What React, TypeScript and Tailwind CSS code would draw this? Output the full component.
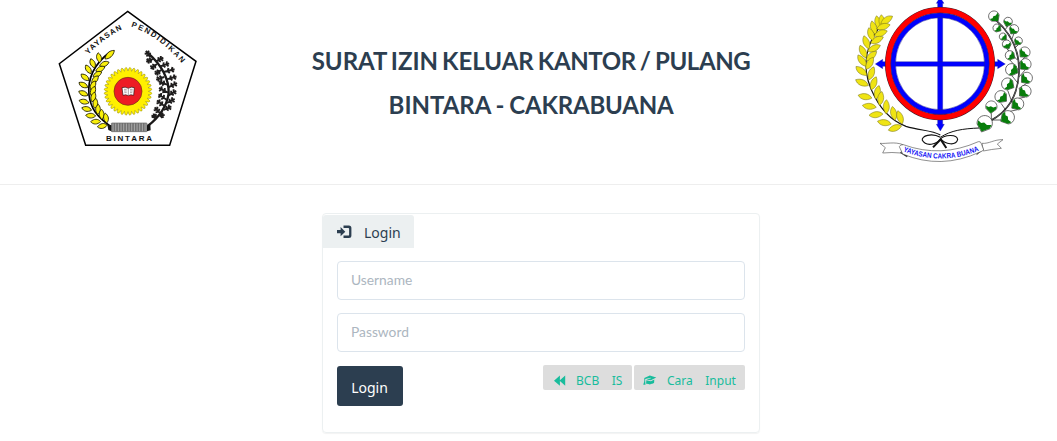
import React from "react";

type Leaf = [number, number, number];
type Pt = [number, number];

const FIRST_LEAVES: Leaf[] = [
  [147, 173, -100], [128, 190, -112], [115, 208, -120], [105, 232, -140], [100, 255, -150],
  [100, 280, -155], [102, 305, -165], [110, 327, -165], [122, 347, -175], [137, 365, 180], [157, 378, 170],
  [163, 192, -20], [151, 207, -25], [142, 223, -30], [135, 239, -48], [129, 256, -60],
  [129, 273, -65], [130, 291, -72], [136, 310, -82], [144, 328, -85], [155, 343, -90], [168, 354, -98],
];

const SECOND_LEAVES: Leaf[] = [
  [99, 68, -102], [86, 83, -105], [78, 103, -108], [64, 127, -110], [54, 155, -115], [51, 182, -125],
  [49, 213, -140], [51, 248, -155], [60, 290, -168], [73, 319, -172], [93, 344, 175], [118, 368, -168],
  [150, 384, 162], [111, 65, -95], [125, 60, -32], [115, 80, -15], [107, 100, -20], [96, 120, -25], [87, 145, -25],
  [79, 168, -40], [74, 190, -58], [79, 220, -68], [86, 250, -68], [97, 277, -75], [107, 295, -80],
  [124, 320, -88], [146, 340, -100], [165, 352, -108],
];

const TWIGS: [Pt, Pt][] = [
  [[302, 172], [293, 160]], [[318, 184], [332, 177]], [[330, 199], [349, 193]], [[341, 216], [365, 210]],
  [[350, 238], [371, 232]], [[355, 262], [373, 253]], [[356, 286], [371, 277]], [[351, 309], [366, 301]],
  [[341, 330], [356, 323]], [[327, 347], [335, 346]], [[310, 177], [297, 182]], [[321, 192], [309, 201]],
  [[334, 210], [322, 218]], [[343, 231], [327, 236]], [[351, 254], [335, 248]], [[354, 278], [335, 268]],
  [[350, 299], [333, 288]], [[344, 319], [328, 307]], [[331, 341], [320, 329]], [[315, 356], [313, 349]],
];

const PODS: [number, number, number, number][] = [
  [447, 49, 16, -40], [489, 65, 13, 20], [456, 84, 12, -55], [507, 88, 14, 35], [474, 110, 11, -50],
  [485, 133, 13, -25], [520, 123, 12, 35], [495, 166, 14, -60], [539, 157, 16, 45], [500, 209, 18, -65],
  [541, 193, 17, 45], [545, 234, 17, 50], [488, 252, 18, -60], [540, 274, 18, 50], [468, 290, 18, -50],
  [518, 312, 18, 55], [439, 320, 17, 5], [488, 352, 20, 60], [419, 370, 23, 20],
];

function Leaves({ items, len, width, fill, stroke, line }: {
  items: Leaf[]; len: number; width: number; fill: string; stroke: string; line: number;
}) {
  const d = `M${-len} 0C${-len / 3} ${-width} ${len / 2} ${-width} ${len} 0C${len / 3} ${width} ${-len / 2} ${width} ${-len} 0Z`;
  return (
    <g fill={fill} stroke={stroke} strokeWidth={line}>
      {items.map(([x, y, a], i) => (
        <path key={i} d={d} transform={`translate(${x} ${y}) rotate(${a})`} />
      ))}
    </g>
  );
}

function sunPath(cx: number, cy: number, outer: number, inner: number, teeth: number) {
  const step = (Math.PI * 2) / teeth;
  let d = `M${cx + inner} ${cy}`;
  for (let i = 0; i < teeth; i++) {
    const mid = (i + 0.5) * step;
    const end = (i + 1) * step;
    d += `Q${cx + Math.cos(mid - step * 0.3) * outer} ${cy + Math.sin(mid - step * 0.3) * outer} ${cx + Math.cos(mid) * outer} ${cy + Math.sin(mid) * outer}`;
    d += `Q${cx + Math.cos(mid + step * 0.3) * outer} ${cy + Math.sin(mid + step * 0.3) * outer} ${cx + Math.cos(end) * inner} ${cy + Math.sin(end) * inner}`;
  }
  return d + "Z";
}

function twigPath([sx, sy]: Pt, [tx, ty]: Pt) {
  const a = Math.atan2(ty - sy, tx - sx);
  const mx = sx + (tx - sx) * 0.5;
  const my = sy + (ty - sy) * 0.5;
  let d = `M${sx} ${sy}L${tx} ${ty}`;
  for (const [x, y] of [[mx, my], [tx, ty]]) {
    for (const off of [-1.05, 0, 1.05]) {
      d += `M${x} ${y}L${x + Math.cos(a + off) * 9} ${y + Math.sin(a + off) * 9}`;
    }
  }
  return d;
}

function BintaraLogo() {
  return (
    <svg className="block h-[155px] w-[155px] shrink-0" viewBox="0 0 465 465" aria-label="Yayasan Pendidikan Bintara">
      <path d="M233 34L438 184L359 436H107L28 191Z" fill="#fff" stroke="#000" strokeWidth="4.5" />
      <defs>
        <path id="arc-left" d="M115 164Q162 113 228 82" />
        <path id="arc-right" d="M243 80Q330 108 404 200" />
      </defs>
      <g fontFamily="Liberation Sans, sans-serif" fontSize="23" fontWeight="700" fill="#111">
        <text textLength="128" lengthAdjust="spacing"><textPath href="#arc-left">YAYASAN</textPath></text>
        <text textLength="190" lengthAdjust="spacing"><textPath href="#arc-right">PENDIDIKAN</textPath></text>
        <text x="168" y="424" fontSize="24" textLength="138">BINTARA</text>
      </g>
      <path d="M180 156C135 190 112 235 117 285C122 325 140 350 183 380" fill="none" stroke="#000" strokeWidth="5" />
      <Leaves items={FIRST_LEAVES} len={15} width={9.5} fill="#f8ee0c" stroke="#1c1a00" line={2.4} />
      <Leaves items={[[179, 164, -42]]} len={19} width={10} fill="#f8ee0c" stroke="#1c1a00" line={2.4} />
      <path d="M295 160C340 200 357 240 356 280C350 320 330 350 293 378" fill="none" stroke="#1a1818" strokeWidth="7" />
      <g stroke="#1f1d1d" strokeWidth="5.6" strokeLinecap="butt" fill="none">
        {TWIGS.map(([s, t], i) => <path key={i} d={twigPath(s, t)} />)}
      </g>
      <path d={sunPath(234, 274, 72, 61, 36)} fill="#ffef00" stroke="#8c8412" strokeWidth="1.5" />
      <circle cx="234" cy="274" r="42" fill="#ed1c24" stroke="#6d3511" strokeWidth="2" />
      <path d="M216 263Q226 259 235 265Q244 259 253 263L251 286Q242 282 235 287Q227 282 219 286Z" fill="#fff" stroke="#281010" strokeWidth="2" />
      <path d="M235 266V285M222 268h8M222 273h8M223 278h7M240 268h8M240 273h8M240 278h7" stroke="#6c5c5c" strokeWidth="1.7" fill="none" />
      <rect x="184" y="369" width="107" height="26" rx="2" fill="#aaa" stroke="#333" strokeWidth="1.5" />
      <path d="M188 382H288" stroke="#4b4b4b" strokeWidth="24" strokeDasharray="1.8 3" />
      <path d="M172 374l12 2v18l-9-4zM291 376l10-2 1 17-11 3z" fill="#151515" />
    </svg>
  );
}

function CakraBuanaLogo() {
  return (
    <svg className="block h-[170px] w-[200px] shrink-0" viewBox="0 0 600 510" aria-label="Yayasan Cakra Buana">
      <path d="M118 66C60 125 50 200 78 267C105 330 145 365 183 379C225 392 260 390 286 405" fill="none" stroke="#111" strokeWidth="3.5" />
      <Leaves items={SECOND_LEAVES} len={21} width={12} fill="#efe414" stroke="#77731a" line={1.5} />
      <g stroke="#18188a" strokeWidth="1" fill="#00f">
        <path d="M278 10H274L285 -8L297 10H293V373H298L286 393L274 373H278Z" />
        <path d="M91 192l22-14v7h345v-7l23 14-23 14v-7H113v7z" />
      </g>
      <ellipse cx="285" cy="191" rx="156" ry="161" fill="none" stroke="#42202c" strokeWidth="18" />
      <ellipse cx="285" cy="191" rx="155.5" ry="160.5" fill="none" stroke="#f00" strokeWidth="16" />
      <ellipse cx="285" cy="191" rx="140.5" ry="145" fill="none" stroke="#00f" strokeWidth="14" />
      <ellipse cx="285" cy="191" rx="147.5" ry="152" fill="none" stroke="#332262" strokeWidth="1.5" />
      <ellipse cx="285" cy="191" rx="133.5" ry="138" fill="none" stroke="#222288" strokeWidth="1.5" />
      <g fill="none" stroke="#111">
        <path d="M447 55C500 100 525 155 522 220C518 280 495 330 440 360" strokeWidth="5" />
        <path d="M447 55C500 100 525 155 522 220C518 280 495 330 440 360" stroke="#aaa" strokeWidth="1.5" />
        <path d="M489 78L481 88M507 100L500 119M520 134L511 143M539 172L522 191M541 209L523 230M545 250L521 266M540 291L510 298M518 329L477 338M488 360L440 360M439 340V360M468 310L482 330M488 271L503 312M500 226L519 250M495 180L520 210M485 146L517 180" strokeWidth="2" />
      </g>
      {PODS.map(([x, y, r, a], i) => (
        <g key={i} transform={`translate(${x} ${y}) rotate(${a})`}>
          <path d={`M0 ${r * 1.2}L${-r * 0.9} ${r * 0.42}A${r} ${r} 0 1 1 ${r * 0.9} ${r * 0.42}Z`} fill="#fff" stroke="#222" strokeWidth="1.8" />
          <path d={`M0 ${r * 1.15}L${-r * 0.85} ${r * 0.42}L${-r * 0.93} ${-r * 0.1}L${-r * 0.45} ${r * 0.12}L${-r * 0.1} ${-r * 0.08}L${r * 0.35} ${r * 0.12}L${r * 0.93} ${-r * 0.1}L${r * 0.85} ${r * 0.42}Z`} fill="#087d0b" />
        </g>
      ))}
      <g fill="none" stroke="#111" strokeWidth="4">
        <path d="M402 384C355 386 318 391 286 412" strokeWidth="3" />
        <path d="M286 412C260 397 228 408 232 421C242 440 276 434 285 418C300 402 337 403 338 419C332 438 302 434 286 416" strokeWidth="3.5" />
        <path d="M264 442L287 418L304 444" strokeWidth="6" />
      </g>
      <g stroke="#444" strokeWidth="1.8" fill="#fff">
        <path d="M174 434C148 424 125 432 105 430L121 443L113 459Q141 456 168 459Z" />
        <path d="M411 430C432 432 447 418 474 419L457 432L469 445Q438 448 415 453Z" />
        <path d="M166 458l20 13 3-14zM395 464l17-13-2-8z" fill="#111" />
        <path d="M163 440Q166 433 175 434Q288 475 400 425Q407 423 409 431L416 450Q411 454 405 456Q288 510 173 462Z" />
      </g>
      <defs><path id="ribbon" d="M174 454Q290 499 407 450" /></defs>
      <text fontFamily="Liberation Sans, sans-serif" fontSize="22" fontWeight="700" fill="#1414f5" textLength="234" lengthAdjust="spacingAndGlyphs">
        <textPath href="#ribbon">YAYASAN CAKRA BUANA</textPath>
      </text>
    </svg>
  );
}

const LogInIcon = () => (
  <svg className="h-[14px] w-[15px]" viewBox="0 0 15 14" fill="currentColor">
    <path d="M0 5h3.6V2L8.3 6.7l-4.7 4.6v-3H0z" />
    <path d="M6.5.6h5.4a2.5 2.5 0 0 1 2.5 2.5v7.3a2.5 2.5 0 0 1-2.5 2.5H6.5v-2.3h4.7a.9.9 0 0 0 .9-.9V3.8a.9.9 0 0 0-.9-.9H6.5z" />
  </svg>
);

const BackwardIcon = () => (
  <svg className="h-[12px] w-[12px]" viewBox="0 0 12 12" fill="currentColor">
    <path d="M5.9.6v4.7L11.2.6v10.2L5.9 6.1v4.7L0 5.7z" />
  </svg>
);

const EducationIcon = () => (
  <svg className="h-[12px] w-[14px]" viewBox="0 0 14 12" fill="currentColor">
    <path d="M6.8.6L13.3 2.4 7.8 5.2 3.4 4.4 8 3.2 7.6 2.8 2.2 4.1V6l.3 3.8H.3L1.3 6V3.1z" />
    <path d="M3.3 5.3l4.6 1 3.4-1.8-.2 3.3C9.8 9.3 8.3 8.4 6.9 9.6 5.8 9 4.3 8.6 3.1 8.8z" />
  </svg>
);

const inputClass =
  "block h-[39px] w-full rounded-[4px] border border-[#dce4ec] bg-white px-[13px] pb-[2px] font-[Lato,sans-serif] text-[13.8px] text-[#2c3e50] outline-none placeholder:text-[#acb6c0] placeholder:opacity-100";
const smallClass =
  "flex h-[25px] items-center rounded-[2px] bg-[#ddd] pt-[6px] text-[12px] leading-[18px] text-[#18bc9c]";

export default function App() {
  return (
    <div className="h-[441px] w-[1057px] overflow-hidden bg-white font-['Noto_Sans',sans-serif] text-[#2c3e50]">
      <header className="flex h-[185px] items-start justify-between border-b border-[#eee] pr-3 pl-[50px]">
        <BintaraLogo />
        <h1 className="pt-[39px] pl-3 text-center font-[Lato,sans-serif] text-[24px] leading-[44px] font-bold whitespace-nowrap">
          <span className="block [word-spacing:-1.8px]">
            SURAT IZIN KELUAR <span className="tracking-[-0.4px]">KANTOR</span> / <span className="tracking-[-0.4px]">PULANG</span>
          </span>
          <span className="block [word-spacing:-1px]">
            BINTARA - <span className="tracking-[-0.2px]">CAKRABUANA</span>
          </span>
        </h1>
        <CakraBuanaLogo />
      </header>
      <main className="mt-7 ml-[322px] h-[220px] w-[438px] rounded-[4px] border border-[#ecf0f1] shadow-[0_1px_1px_rgba(0,0,0,0.05)]">
        <div className="mt-px flex h-[33px] w-[91px] items-center rounded-t-[3px] bg-[#ecf0f1] pl-[14px] text-[14px]">
          <LogInIcon />
          <span className="ml-3 pt-[2px]">Login</span>
        </div>
        <form className="px-[14px] pt-[13px]" onSubmit={(e) => e.preventDefault()}>
          <input className={inputClass} placeholder="Username" />
          <input className={`${inputClass} mt-[13px]`} type="password" placeholder="Password" />
          <div className="mt-[13px] flex items-start justify-between">
            <button className="mt-px h-[40px] w-[66px] rounded-[3px] bg-[#2c3e50] pt-[3px] pr-px text-[14px] text-white">Login</button>
            <div className="flex gap-[2px]">
              <a className={`${smallClass} w-[89px] pl-[11px]`}>
                <BackwardIcon />
                <span className="ml-[10px]">BCB</span>
                <span className="ml-[12.5px]">IS</span>
              </a>
              <a className={`${smallClass} w-[111px] pl-[9px]`}>
                <EducationIcon />
                <span className="ml-[10px]">Cara</span>
                <span className="ml-[12.5px]">Input</span>
              </a>
            </div>
          </div>
        </form>
      </main>
    </div>
  );
}
